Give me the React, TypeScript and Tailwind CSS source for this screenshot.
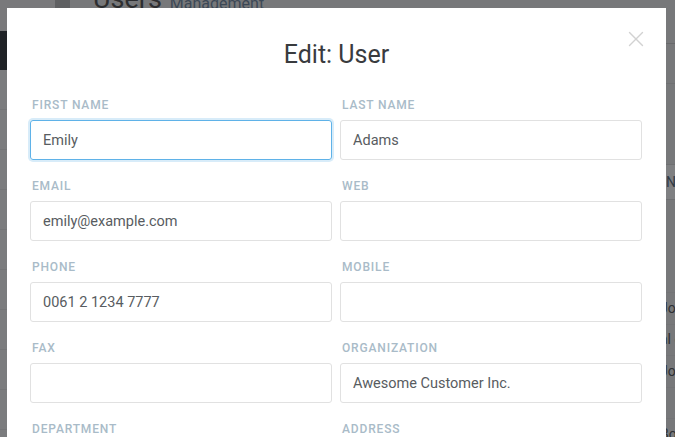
import { X } from "lucide-react";

type Field = { label: string; value?: string; focused?: boolean };

const fields: Field[] = [
  { label: "First name", value: "Emily", focused: true },
  { label: "Last name", value: "Adams" },
  { label: "Email", value: "emily@example.com" },
  { label: "Web" },
  { label: "Phone", value: "0061 2 1234 7777" },
  { label: "Mobile" },
  { label: "Fax" },
  { label: "Organization", value: "Awesome Customer Inc." },
  { label: "Department" },
  { label: "Address" },
];

function FormField({ label, value, focused }: Field) {
  return (
    <div className="flex flex-col">
      <label className="px-[2px] h-4 mb-[7px] text-[12px] leading-4 font-medium uppercase tracking-[0.07em] text-[#a9bbc8]">
        {label}
      </label>
      <input
        type="text"
        readOnly
        value={value ?? ""}
        className={
          focused
            ? "h-10 w-full rounded-[3px] border border-[#5fb2e8] px-3 text-[14.5px] text-[#585c61] outline-none shadow-[0_0_0_2px_rgba(99,178,232,0.25)]"
            : "h-10 w-full rounded-[3px] border border-[#e1e1e1] px-3 text-[14.5px] text-[#585c61] outline-none"
        }
      />
    </div>
  );
}

function Background() {
  return (
    <div className="flex h-full w-full">
      <div className="flex w-[55px] shrink-0 flex-col bg-[#7b7c7e]">
        <div className="h-[31px] shrink-0 bg-[#79797b]" />
        <div className="h-[39px] shrink-0 bg-[#1f2226]" />
        <div className="flex-1">
          {Array.from({ length: 12 }).map((_, i) => (
            <div key={i} className="h-10 border-b border-[#747577]" />
          ))}
        </div>
      </div>
      <div className="flex flex-1 flex-col overflow-hidden bg-[#77787a]">
        <div className="flex h-[44px] shrink-0 items-start border-b border-[#68696b]">
          <div className="h-[10px] w-[15px] bg-[#5f6062]" />
          <div className="-mt-[17px] ml-[23px] flex items-end gap-[8px]">
            <span className="text-[27px] leading-8 text-[#2d2e30]">Users</span>
            <span className="mb-[1px] text-[16px] leading-5 text-[#3c4856]">Management</span>
          </div>
        </div>
        <div className="h-10 shrink-0 border-b border-[#6f7072]" />
        <div className="h-[80px] shrink-0" />
        <div className="flex h-[36px] shrink-0 items-center justify-end border-y border-[#6f7072] bg-[#7f8082] text-[14px] text-[#2f3a45]">
          <span className="-mr-[41px] w-[50px]">NAME</span>
        </div>
        <div className="h-[93px] shrink-0 border-b border-[#737476]" />
        {["Jo", "al co", "Jo", "", "Bo"].map((t, i) => (
          <div
            key={i}
            className="flex h-[31.5px] shrink-0 items-center justify-end border-b border-[#737476] text-[14px] text-[#2f3033]"
          >
            <span className="-mr-[35px] w-[50px]">{t}</span>
          </div>
        ))}
      </div>
    </div>
  );
}

export default function App() {
  return (
    <div className="relative h-[437px] w-full overflow-hidden font-['Roboto','Liberation_Sans',sans-serif]">
      <Background />
      <div className="absolute left-[7px] top-[8px] h-[460px] w-[659px] bg-white">
        <button className="absolute right-[17px] top-[18px] text-[#d2d2d2]">
          <X size={26} strokeWidth={1.3} />
        </button>
        <h1 className="pt-[31px] text-center text-[25px] leading-8 text-[#393b3e]">Edit: User</h1>
        <div className="mt-[26px] grid grid-cols-2 gap-x-2 gap-y-[18px] pl-[23px] pr-[24px]">
          {fields.map((f) => (
            <FormField key={f.label} {...f} />
          ))}
        </div>
      </div>
    </div>
  );
}
